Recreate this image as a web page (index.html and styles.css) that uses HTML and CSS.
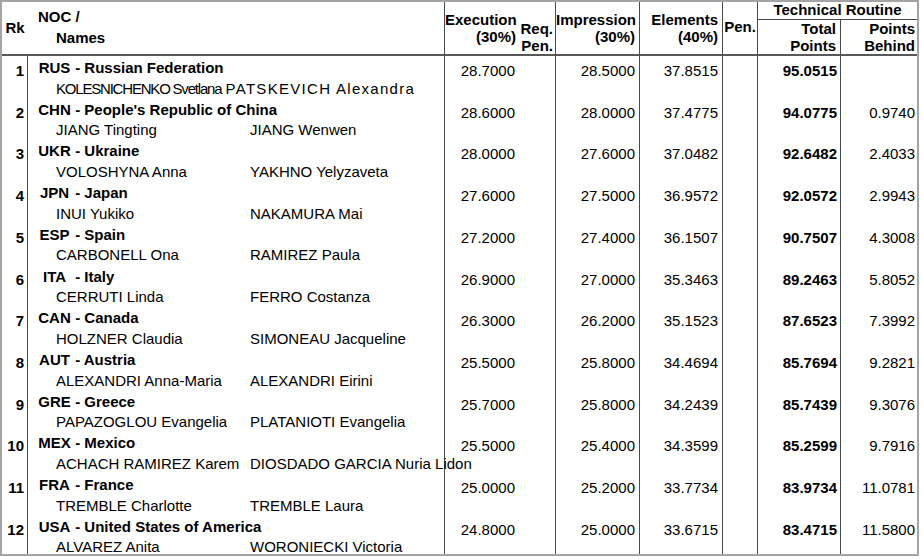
FILE: index.html
```html
<!DOCTYPE html>
<html lang="en">
<head>
<meta charset="utf-8">
<title>Technical Routine Results</title>
<link rel="stylesheet" href="styles.css">
</head>
<body>
<table class="results">
  <colgroup>
    <col class="c-rk"><col class="c-noc"><col class="c-exe"><col class="c-req"><col class="c-imp"><col class="c-ele"><col class="c-pen"><col class="c-tot"><col class="c-beh">
  </colgroup>
  <thead>
    <tr class="head-top">
      <th rowspan="2" class="h-rk">Rk</th>
      <th rowspan="2" class="h-noc"><div class="h-line">NOC /</div><div class="h-line h-indent">Names</div></th>
      <th rowspan="2" class="h-exe">Execution<br>(30%)</th>
      <th rowspan="2" class="h-req">Req.<br>Pen.</th>
      <th rowspan="2" class="h-imp">Impression<br>(30%)</th>
      <th rowspan="2" class="h-ele">Elements<br>(40%)</th>
      <th rowspan="2" class="h-pen">Pen.</th>
      <th colspan="2" class="h-group">Technical Routine</th>
    </tr>
    <tr class="head-sub">
      <th class="h-tot">Total<br>Points</th>
      <th class="h-beh">Points<br>Behind</th>
    </tr>
  </thead>
  <tbody>
    <tr class="row">
      <td class="rk">1</td>
      <td class="noc"><div class="noc-line"><span class="code">RUS</span> - Russian Federation</div><div class="names"><span class="name-a name-a--condensed">KOLESNICHENKO Svetlana</span> <span class="name-b name-b--expanded">PATSKEVICH Alexandra</span></div></td>
      <td class="num exe">28.7000</td><td class="num req"></td><td class="num imp">28.5000</td><td class="num ele">37.8515</td><td class="num pen"></td><td class="num tot">95.0515</td><td class="num beh"></td>
    </tr>
    <tr class="row">
      <td class="rk">2</td>
      <td class="noc"><div class="noc-line"><span class="code">CHN</span> - People's Republic of China</div><div class="names"><span class="name-a">JIANG Tingting</span><span class="name-b">JIANG Wenwen</span></div></td>
      <td class="num exe">28.6000</td><td class="num req"></td><td class="num imp">28.0000</td><td class="num ele">37.4775</td><td class="num pen"></td><td class="num tot">94.0775</td><td class="num beh">0.9740</td>
    </tr>
    <tr class="row">
      <td class="rk">3</td>
      <td class="noc"><div class="noc-line"><span class="code">UKR</span> - Ukraine</div><div class="names"><span class="name-a">VOLOSHYNA Anna</span><span class="name-b">YAKHNO Yelyzaveta</span></div></td>
      <td class="num exe">28.0000</td><td class="num req"></td><td class="num imp">27.6000</td><td class="num ele">37.0482</td><td class="num pen"></td><td class="num tot">92.6482</td><td class="num beh">2.4033</td>
    </tr>
    <tr class="row">
      <td class="rk">4</td>
      <td class="noc"><div class="noc-line"><span class="code">JPN</span> - Japan</div><div class="names"><span class="name-a">INUI Yukiko</span><span class="name-b">NAKAMURA Mai</span></div></td>
      <td class="num exe">27.6000</td><td class="num req"></td><td class="num imp">27.5000</td><td class="num ele">36.9572</td><td class="num pen"></td><td class="num tot">92.0572</td><td class="num beh">2.9943</td>
    </tr>
    <tr class="row">
      <td class="rk">5</td>
      <td class="noc"><div class="noc-line"><span class="code">ESP</span> - Spain</div><div class="names"><span class="name-a">CARBONELL Ona</span><span class="name-b">RAMIREZ Paula</span></div></td>
      <td class="num exe">27.2000</td><td class="num req"></td><td class="num imp">27.4000</td><td class="num ele">36.1507</td><td class="num pen"></td><td class="num tot">90.7507</td><td class="num beh">4.3008</td>
    </tr>
    <tr class="row">
      <td class="rk">6</td>
      <td class="noc"><div class="noc-line"><span class="code">ITA</span> - Italy</div><div class="names"><span class="name-a">CERRUTI Linda</span><span class="name-b">FERRO Costanza</span></div></td>
      <td class="num exe">26.9000</td><td class="num req"></td><td class="num imp">27.0000</td><td class="num ele">35.3463</td><td class="num pen"></td><td class="num tot">89.2463</td><td class="num beh">5.8052</td>
    </tr>
    <tr class="row">
      <td class="rk">7</td>
      <td class="noc"><div class="noc-line"><span class="code">CAN</span> - Canada</div><div class="names"><span class="name-a">HOLZNER Claudia</span><span class="name-b">SIMONEAU Jacqueline</span></div></td>
      <td class="num exe">26.3000</td><td class="num req"></td><td class="num imp">26.2000</td><td class="num ele">35.1523</td><td class="num pen"></td><td class="num tot">87.6523</td><td class="num beh">7.3992</td>
    </tr>
    <tr class="row">
      <td class="rk">8</td>
      <td class="noc"><div class="noc-line"><span class="code">AUT</span> - Austria</div><div class="names"><span class="name-a">ALEXANDRI Anna-Maria</span><span class="name-b">ALEXANDRI Eirini</span></div></td>
      <td class="num exe">25.5000</td><td class="num req"></td><td class="num imp">25.8000</td><td class="num ele">34.4694</td><td class="num pen"></td><td class="num tot">85.7694</td><td class="num beh">9.2821</td>
    </tr>
    <tr class="row">
      <td class="rk">9</td>
      <td class="noc"><div class="noc-line"><span class="code">GRE</span> - Greece</div><div class="names"><span class="name-a">PAPAZOGLOU Evangelia</span><span class="name-b">PLATANIOTI Evangelia</span></div></td>
      <td class="num exe">25.7000</td><td class="num req"></td><td class="num imp">25.8000</td><td class="num ele">34.2439</td><td class="num pen"></td><td class="num tot">85.7439</td><td class="num beh">9.3076</td>
    </tr>
    <tr class="row">
      <td class="rk">10</td>
      <td class="noc"><div class="noc-line"><span class="code">MEX</span> - Mexico</div><div class="names"><span class="name-a">ACHACH RAMIREZ Karem</span><span class="name-b">DIOSDADO GARCIA Nuria Lidon</span></div></td>
      <td class="num exe">25.5000</td><td class="num req"></td><td class="num imp">25.4000</td><td class="num ele">34.3599</td><td class="num pen"></td><td class="num tot">85.2599</td><td class="num beh">9.7916</td>
    </tr>
    <tr class="row">
      <td class="rk">11</td>
      <td class="noc"><div class="noc-line"><span class="code">FRA</span> - France</div><div class="names"><span class="name-a">TREMBLE Charlotte</span><span class="name-b">TREMBLE Laura</span></div></td>
      <td class="num exe">25.0000</td><td class="num req"></td><td class="num imp">25.2000</td><td class="num ele">33.7734</td><td class="num pen"></td><td class="num tot">83.9734</td><td class="num beh">11.0781</td>
    </tr>
    <tr class="row row-last">
      <td class="rk">12</td>
      <td class="noc"><div class="noc-line"><span class="code">USA</span> - United States of America</div><div class="names"><span class="name-a">ALVAREZ Anita</span><span class="name-b">WORONIECKI Victoria</span></div></td>
      <td class="num exe">24.8000</td><td class="num req"></td><td class="num imp">25.0000</td><td class="num ele">33.6715</td><td class="num pen"></td><td class="num tot">83.4715</td><td class="num beh">11.5800</td>
    </tr>
  </tbody>
</table>
</body>
</html>
```

FILE: styles.css
```css
html, body {
  margin: 0;
  padding: 0;
  background: #ffffff;
}

body {
  font-family: "Liberation Sans", Arial, sans-serif;
  font-size: 15px;
  color: #000000;
}

.results {
  border-collapse: separate;
  border-spacing: 0;
  table-layout: fixed;
  width: 919px;
  border: 2px solid #a4a4a4;
}

.results th,
.results td {
  padding: 0;
  box-sizing: border-box;
}

.c-rk { width: 26px; }
.c-noc { width: 417px; }
.c-exe { width: 74px; }
.c-req { width: 37px; }
.c-imp { width: 84px; }
.c-ele { width: 83px; }
.c-pen { width: 35px; }
.c-tot { width: 83px; }
.c-beh { width: 76px; }

/* ---------- header ---------- */
.results th {
  font-weight: bold;
  white-space: nowrap;
}

.head-top th[rowspan],
.head-sub th {
  border-bottom: 2px solid #585858;
}

.h-rk {
  text-align: center;
  vertical-align: middle;
  line-height: 17px;
  padding-bottom: 1px !important;
}

.h-noc {
  text-align: left;
  vertical-align: middle;
  padding: 0 0 2px 10px !important;
  border-right: 1px solid #4a4a4a;
}

.h-line {
  line-height: 21px;
}

.h-indent {
  padding-left: 18px;
}

.h-exe,
.h-imp,
.h-ele {
  text-align: right;
  vertical-align: middle;
  line-height: 17px;
}

.h-exe { padding-right: 3px !important; }
.h-imp { padding-right: 4px !important; border-right: 1px solid #4a4a4a; }
.h-ele { padding-right: 4px !important; border-right: 1px solid #4a4a4a; }

.h-req {
  text-align: right;
  vertical-align: bottom;
  line-height: 16.5px;
  padding-right: 2px !important;
  border-right: 1px solid #4a4a4a;
}

.h-pen {
  text-align: center;
  vertical-align: middle;
  line-height: 17px;
  padding-bottom: 3px !important;
  border-right: 1px solid #4a4a4a;
}

.h-group {
  height: 18px;
  text-align: center;
  vertical-align: top;
  line-height: 16px;
  border-bottom: 1px solid #4a4a4a;
}

.h-tot,
.h-beh {
  height: 36px;
  text-align: right;
  vertical-align: bottom;
  line-height: 16.5px;
}

.h-tot {
  padding-right: 4px !important;
  border-right: 1px solid #4a4a4a;
}

.h-beh {
  padding-right: 2px !important;
}

/* ---------- body ---------- */
.row {
  height: 41.73px;
}

.row-last {
  height: 39px;
}

.rk {
  text-align: right;
  vertical-align: top;
  font-weight: bold;
  line-height: 18px;
  padding: 6px 3px 0 0 !important;
  border-right: 1px solid #4a4a4a;
}

.noc {
  vertical-align: top;
  white-space: nowrap;
  padding: 1px 0 0 10px !important;
  border-right: 1px solid #4a4a4a;
}

.noc-line {
  font-weight: bold;
  line-height: 21px;
}

.code {
  display: inline-block;
  width: 33px;
  text-align: center;
}

.names {
  margin-top: 1.5px;
  line-height: 18px;
  padding-left: 18px;
}

.row-last .names {
  margin-bottom: -3px;
}

.name-a {
  display: inline-block;
  width: 194px;
}

.name-a--condensed {
  width: auto;
  letter-spacing: -1.2px;
}

.name-b--expanded {
  letter-spacing: 1.3px;
}

.num {
  text-align: right;
  vertical-align: top;
  line-height: 18px;
  padding-top: 6px !important;
}

.exe { padding-right: 4px !important; }
.req { border-right: 1px solid #4a4a4a; }
.imp { padding-right: 4px !important; border-right: 1px solid #4a4a4a; }
.ele { padding-right: 4px !important; border-right: 1px solid #4a4a4a; }
.pen { border-right: 1px solid #4a4a4a; }
.tot { padding-right: 3px !important; border-right: 1px solid #4a4a4a; font-weight: bold; }
.beh { padding-right: 2px !important; }
```
